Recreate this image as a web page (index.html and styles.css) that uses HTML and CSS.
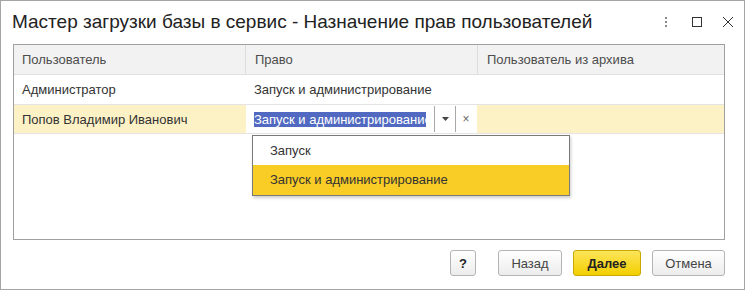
FILE: index.html
```html
<!DOCTYPE html>
<html>
<head>
    <title>Мастер загрузки базы в сервис</title>
    <meta charset="utf-8">
    <link rel="stylesheet" href="styles.css">
</head>
<body>
    <div class="window">
        <div class="titlebar">
            <h1>Мастер загрузки базы в сервис - Назначение прав пользователей</h1>
            <div class="win-controls">
                <svg width="12" height="12" viewBox="0 0 12 12"><g fill="#8a8a8a"><rect x="5" y="1" width="2" height="2"/><rect x="5" y="5" width="2" height="2"/><rect x="5" y="9" width="2" height="2"/></g></svg>
                <svg width="12" height="12" viewBox="0 0 12 12"><rect x="1.5" y="1.5" width="9" height="9" fill="none" stroke="#333" stroke-width="1"/></svg>
                <svg width="12" height="12" viewBox="0 0 12 12"><path d="M1 1 L11 11 M11 1 L1 11" stroke="#333" stroke-width="1"/></svg>
            </div>
        </div>

        <div class="grid">
            <div class="row head">
                <div class="cell">Пользователь</div>
                <div class="cell">Право</div>
                <div class="cell">Пользователь из архива</div>
            </div>
            <div class="row">
                <div class="cell">Администратор</div>
                <div class="cell">Запуск и администрирование</div>
                <div class="cell"></div>
            </div>
            <div class="row current">
                <div class="cell">Попов Владимир Иванович</div>
                <div class="cell edit">
                    <div class="edit-text"><span class="sel">Запуск и администрирование</span></div>
                    <div class="edit-btn"><svg width="7" height="4" viewBox="0 0 7 4"><path d="M0 0 H7 L3.5 4 Z" fill="#444"/></svg></div>
                    <div class="edit-btn clear">×</div>
                </div>
                <div class="cell"></div>
            </div>

            <div class="dropdown">
                <div class="item">Запуск</div>
                <div class="item active">Запуск и администрирование</div>
            </div>
        </div>

        <div class="buttons">
            <button class="btn help">?</button>
            <button class="btn back">Назад</button>
            <button class="btn primary">Далее</button>
            <button class="btn">Отмена</button>
        </div>
    </div>
</body>
</html>
```

FILE: styles.css
```css
body {
    margin: 0;
    font-family: "Liberation Sans", Arial, sans-serif;
    background: white;
}
.window {
    width: 745px;
    height: 290px;
    box-sizing: border-box;
    border: 1px solid #a5a5a5;
    background: white;
}
.titlebar {
    display: flex;
    align-items: center;
    justify-content: space-between;
    height: 42px;
    padding: 0 10px 0 11px;
}
.titlebar h1 {
    margin: 0;
    font-size: 19px;
    font-weight: normal;
    color: #222;
}
.win-controls {
    display: flex;
    align-items: center;
    gap: 19px;
}
.grid {
    position: relative;
    margin: 1px 19px 0 12px;
    height: 194px;
    border: 1px solid #a0a0a0;
    font-size: 13px;
    color: #333;
}
.row {
    display: grid;
    grid-template-columns: 231px 232px 1fr;
    height: 29px;
    border-bottom: 1px solid #e4e4e4;
}
.row.head {
    height: 29px;
    background: #f2f2f2;
    color: #4d4d4d;
    border-bottom: 1px solid #e0e0e0;
}
.row.head .cell + .cell {
    border-left: 1px solid #dcdcdc;
}
.row.head .cell {
    padding-left: 8px;
}
.cell {
    display: flex;
    align-items: center;
    padding-left: 8px;
    white-space: nowrap;
    overflow: hidden;
}
.row .cell + .cell {
    padding-left: 9px;
}
.row.current {
    height: 28px;
    background: #fdf2c6;
}
.row.current .edit {
    background: white;
    padding: 0 1px 0 0;
    margin-left: 1px;
}
.edit-text {
    flex: 1;
    padding-left: 8px;
    margin-right: 8px;
    overflow: hidden;
    white-space: nowrap;
}
.sel {
    background: #5169c0;
    color: white;
    padding: 1px 0 2px;
}
.edit-btn {
    flex: none;
    width: 20px;
    height: 26px;
    display: flex;
    align-items: center;
    justify-content: center;
    border-left: 1px solid #a8a8a8;
}
.edit-btn.clear {
    color: #666;
    font-size: 12px;
}
.dropdown {
    position: absolute;
    left: 238px;
    top: 90px;
    width: 316px;
    border: 1px solid #7a7a7a;
    background: white;
    box-shadow: 1px 2px 3px rgba(0,0,0,0.2);
}
.dropdown .item {
    height: 29px;
    line-height: 29px;
    padding-left: 17px;
    color: #333;
}
.dropdown .item.active {
    height: 30px;
    line-height: 30px;
    background: #f9cc26;
}
.buttons {
    display: flex;
    justify-content: flex-end;
    gap: 11px;
    padding: 10px 19px 0 0;
}
.btn {
    height: 26px;
    padding: 0 12px;
    font-family: "Liberation Sans", Arial, sans-serif;
    font-size: 13px;
    color: #444;
    background: linear-gradient(#ffffff, #ececec);
    border: 1px solid #b4b4b4;
    border-radius: 3px;
}
.btn.help {
    width: 26px;
    padding: 0;
    font-weight: bold;
    color: #222;
    margin-right: 11px;
}
.btn.back {
    width: 64px;
}
.btn.primary {
    width: 68px;
    font-weight: bold;
    color: #222;
    background: linear-gradient(#fde55a, #f3cf00);
    border-color: #c9a800;
}
.btn:last-child {
    width: 73px;
}
```
